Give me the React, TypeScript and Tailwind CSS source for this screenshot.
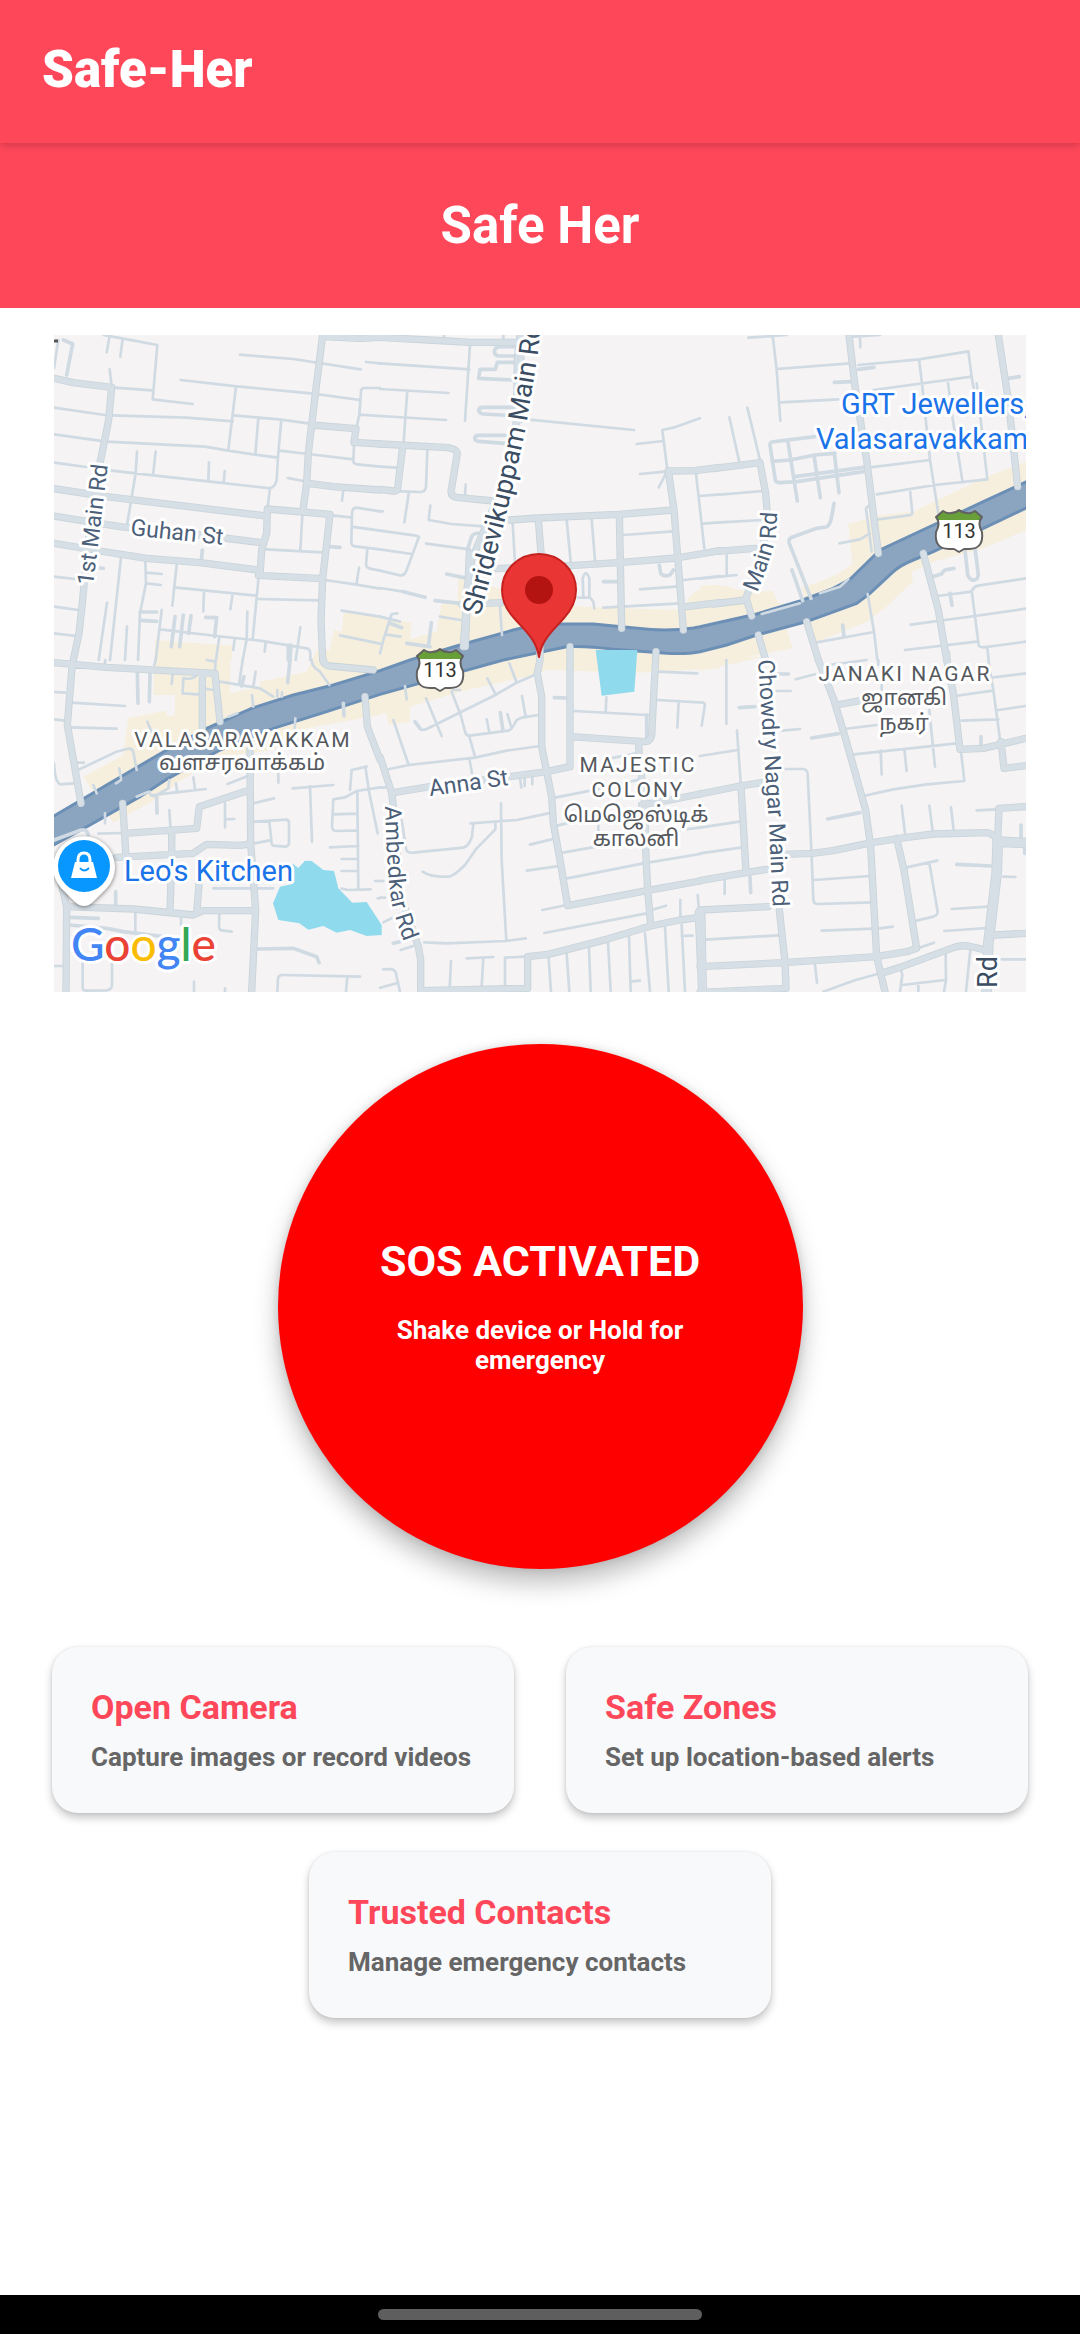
import React from "react";

type Tile = {
  x: number;
  y: number;
  minor: string;
  lane: string;
  main: string;
  built: string;
};

/* Street geometry, one entry per map tile. Tile units are a third of a map unit. */
const TILES: Tile[] = [
  {
    x: -42,
    y: -45,
    built:
      "M355,962 L575,977 V1020 H345Z M912,872 L1020,888 V1020 H862 L870,985 L882,930 L905,935 Z",
    minor:
      "M190,45 L262,58 L352,75 L338,238 L458,252 M209,48 L200,97 M248,56 L241,110 M209,148 L214,192 M222,203 L337,211 M42,145 L55,60 M422,180 L590,199 L820,221 L960,240 M600,104 L760,117 L962,148 M588,200 L565,390 M42,263 L195,285 M215,286 L440,293 L578,304 M582,286 L724,299 L810,311 M655,293 L646,403 M724,299 L714,410 L710,480 Q706,500 690,505 L683,560 M42,343 L200,365 L495,380 L560,391 L645,404 L714,413 M718,392 L805,402 L940,418 M42,428 L140,441 M215,452 L340,466 L505,484 L690,505 M291,395 L287,460 L261,615 M347,395 L339,466 M507,427 L505,484 M554,453 L551,488 M743,474 L800,485 M787,585 L781,690 M678,688 L845,697 M875,586 L932,592 M978,126 L1020,130 M1020,204 L972,204 Q964,204 963,214 L958,284 L950,320 M958,284 L1020,288 M942,375 L940,425 Q942,432 952,433 L1020,440 M910,510 L906,542 M1020,574 L950,563 Q937,563 936,580 L934,665 Q934,678 945,679 L1020,688 M934,620 L1020,632 M982,685 L978,735 Q980,744 990,746 L1020,752 M855,780 L950,794 L1020,806 M957,743 L949,794 M243,712 L210,1020 M316,725 L318,790 L300,880 L294,1020 M320,758 L365,762 M320,790 L362,795 M410,735 L397,857 M402,802 L650,827 M492,812 L490,874 M578,821 L571,868 M656,770 L638,958 M655,837 L833,841 M42,770 L105,777 M42,860 L115,870 M42,940 L108,948 M201,848 L176,1020 M261,920 L255,1020 M365,870 L347,1020 M360,928 L530,948 L660,962 L800,985 Q811,988 811,1000 L811,1020 M622,875 L620,958 L608,1020 M538,950 L528,1020 M584,955 L580,990 M677,965 L674,995 M781,922 L767,1020 M905,872 L1020,890 M900,946 L1020,971",
    lane:
      "M70,60 L98,72 L80,165 M484,720 L487,690 M300,876 H350 M300,901 L350,904 M405,890 L394,980 M430,885 L419,980 M453,887 L446,940 M497,892 L530,893 L524,950 M745,975 V1020 M753,975 L750,1020 M868,680 L900,682 M180,744 L190,745",
    main:
      "M42,175 L100,188 L215,202 L206,300 L180,430 L165,520 L150,620 L135,760 L128,840 L117,940 L100,1020 M848,45 L836,140 L815,313 L805,400 L800,490 L788,577 M852,50 L960,55 L1020,52 M42,506 L200,530 L670,587 M42,588 L240,620 L480,645 L665,668 M42,670 L180,693 L320,715 L480,728 L655,750 M660,765 L665,690 L680,640 L682,567 L870,583 L848,775 L843,900 L848,1020 M655,766 L848,776 M815,315 L948,326 L942,367 L1020,372 M805,490 L880,500 L1020,510",
  },
  {
    x: 978,
    y: -45,
    built:
      "M235,775 L340,800 L520,855 L720,865 L910,870 L925,835 Q950,800 1020,795 V1020 H0 V895 L95,907 L90,958 L170,935 L185,850 L232,855Z",
    minor:
      "M0,130 L268,148 M270,75 L255,302 M0,207 L205,219 M82,212 L71,365 M0,288 L198,300 M0,440 L48,443 M142,390 L138,500 Q136,516 122,516 L62,514 M86,520 L73,607 M0,574 H8 M151,557 L146,600 L215,612 L310,619 M0,632 L108,647 L117,650 L78,755 Q72,768 60,766 L0,752 M0,688 L95,702 M138,671 L270,688 M0,804 L70,815 M257,494 L255,525 M192,45 V55 M370,45 V60 M440,298 L762,330 M770,372 L850,363 M780,462 L855,455 M960,295 L880,323 L847,330 L862,450 M858,460 L836,502 M398,610 L405,730 M560,600 L572,725 M635,597 L645,722 M730,645 L880,634 M948,460 L973,685 M958,528 L1020,523 M970,611 L1020,607 M780,808 L895,799 M912,780 L1020,768 M670,863 L900,850 M360,860 L366,945 M180,890 L240,900 M0,890 L60,905 M52,880 L35,882 L10,960 L0,1000 M15,943 L62,950 M610,830 L608,775 Q617,745 628,775 L628,830 L640,845 L643,865 M595,833 L628,833",
    lane:
      "M200,762 L262,775 M70,815 L135,832 M165,842 L240,850 M30,910 L65,923 M154,908 L145,980 M80,970 L150,980 M405,80 H360 Q343,82 343,96 Q345,108 360,108 H400 M400,127 H352 L346,148 H300 L296,175 L400,180 M400,262 H310 Q296,262 296,272 Q300,282 310,282 L400,287 M375,346 H295 Q284,346 284,356 Q286,364 296,364 L375,370 M262,690 L275,650 Q280,638 300,640 M670,785 H712 M838,735 L842,760 Q850,772 870,765 L880,750",
    main:
      "M0,52 L200,63 L270,67 L405,67 M420,45 L412,120 L410,300 L390,420 L350,540 L275,720 L262,800 L250,980 M424,45 L418,300 M268,700 L256,980 M0,372 L205,383 Q232,388 232,400 L213,515 Q214,530 230,532 L340,543 M68,380 L53,505 Q52,515 40,513 L0,508 M390,600 L475,594 L718,583 L880,570 M475,598 L483,700 M718,585 L725,925 M865,452 L882,570 L910,930 M865,453 L945,452 L1020,442 M280,750 L365,745 L570,737 L725,727 L890,714 L1020,692 M245,853 L365,848 M918,860 L1020,848",
  },
  {
    x: 1938,
    y: -45,
    built:
      "M978,425 L860,470 L640,575 L545,585 L445,612 L457,730 Q420,770 305,802 L320,850 L235,850 L218,812 L150,818 L85,800 Q30,790 0,800 V1035 L200,1000 L278,985 L250,890 L300,890 L320,935 L350,965 L500,905 L560,860 L638,785 L636,755 L700,725 L850,685 L978,630 Z",
    minor:
      "M145,53 L260,45 M218,47 L230,150 L241,302 M230,147 L450,130 M242,247 L415,238 M88,292 L118,427 M142,263 L180,420 M480,50 L481,82 M460,50 L540,45 M520,210 L815,170 M657,118 L666,190 L690,420 L715,580 M805,94 L815,170 L822,210 M743,180 L757,290 L788,488 M475,135 L657,118 L805,94 M830,190 L862,478 L705,495 L530,523 M510,442 L690,420 M630,508 L637,580 Q636,586 620,587 L535,598 M510,555 L498,565 L515,695 M418,670 L480,658 L510,640 M60,524 L190,513 M60,607 L190,600 M80,705 V765 M0,776 L110,765 M185,882 L300,850 M360,820 L420,800 L445,778 M503,822 L522,935 L532,1020 M350,967 L522,936 M712,828 L815,815 Q820,800 835,797 L978,775 M815,812 L836,975 Q838,982 850,982 L978,965 M632,914 L825,888 L978,866 M615,990 L830,965 M862,985 L866,1020",
    lane:
      "M475,148 L522,142 M403,187 L455,185 M345,350 L215,366 Q210,368 210,376 L226,480 Q228,488 240,488 L290,485 L490,455 M216,424 L270,420 L345,405 L405,400 M263,360 L292,543 M342,405 L361,533 M403,400 L417,518 M285,470 L490,442 M402,550 L395,590 Q390,618 378,621 L350,625 L280,650 Q265,655 267,668 L333,835 M276,750 L308,842 M697,770 L725,762 Q730,748 745,748 L762,745 M750,820 L756,856 M428,915 L432,950 M925,175 L958,170 M795,690 L803,765 Q815,790 832,775 L835,765 L825,685",
    main:
      "M447,45 L465,200 L500,420 L535,700 M895,45 L925,240 L953,500 M40,446 L180,428 L197,520 L205,620 L170,740 L138,835 L155,888 M40,695 L165,685 M40,852 L138,840 M175,945 L197,1020 M320,905 L355,1020 M670,700 L715,870 L740,1020",
  },
  {
    x: -42,
    y: 975,
    built:
      "M345,-60 L572,-43 L570,100 L660,80 V65 L800,35 L830,-30 H1020 V165 L800,205 L700,270 L540,290 L410,370 L360,410 L220,488 L130,350 L250,285 L265,175 L375,152 L385,170 L405,165 V105 H340Z",
    minor:
      "M42,96 L75,98 M95,128 L255,138 M42,178 L75,182 M92,202 L230,206 M42,310 Q45,365 60,373 L100,370 M118,328 L230,275 L260,267 Q275,262 280,275 L290,330 M110,308 H132 M195,460 V490 M175,521 L245,519 M388,450 L391,500 M340,405 L400,398 L497,387 M330,395 Q328,410 345,408 L385,385 L388,360 M408,370 L412,398 M460,352 L465,388 M563,372 L618,350 M715,340 V368 M758,385 L880,375 M810,380 L816,545 M640,430 L702,415 M643,485 L740,479 Q747,480 747,490 V550 Q745,560 735,560 L700,557 Q694,555 694,540 L688,485 M643,550 L690,541 M555,430 V502 M555,478 L583,477 M538,762 L537,800 Q538,812 550,812 L575,815 M520,685 H700 M423,775 V795 M286,760 L286,822 M215,590 H245 M930,390 L935,330 L980,320 M976,320 L988,400 L1013,520 M1020,382 L950,393 L915,412 L880,418 L876,500 Q878,514 890,513 L952,511 M880,463 L950,461 M952,395 L955,688 M870,562 L955,558 M905,597 H952 M905,633 H952 M905,686 L925,690 L992,688 M1005,663 H1020 M1013,715 h7 M712,995 L714,955 Q716,945 728,945 L960,950 M922,950 L918,995 M462,965 V995 M555,985 V995 M42,918 H65 M128,905 V985 Q128,992 140,992 L200,991 Q216,988 216,975 V905 M196,0 L192,28 M347,0 L343,15 M500,0 L527,5 L525,30 M398,40 L395,72 M470,45 Q460,60 430,55 L428,100 L475,103 M490,85 L520,90 M540,65 L660,85 L700,110 M608,0 L597,75 M647,35 L640,80 M636,105 L640,140 M815,0 Q815,20 840,35 L868,75 M766,175 L764,205 M322,185 L345,240 M160,375 L170,400 M238,325 L243,355 M228,370 L243,360 M290,410 L325,395 M565,170 L592,160 M712,90 L712,110 M726,97 V110",
    lane:
      "M292,40 L294,130 M330,40 L328,125 M750,0 L743,68 M350,408 L351,460 M910,130 L912,168 M227,695 V735 M88,772 L175,775 M88,795 L200,805 L250,815 L370,830 M653,867 L760,865 L830,890 L837,908 M612,50 L605,78 M42,540 L110,515 Q140,500 145,525",
    main:
      "M42,8 L200,22 L525,40 L540,185 M97,10 L82,195 L123,430 M487,45 V205 M248,430 L258,590 M255,520 L470,505 L478,440 L620,393 M395,510 V580 M630,270 L632,550 L647,750 L635,995 M230,592 L460,580 L500,553 L600,556 L630,552 M393,660 L390,755 M478,660 L470,760 M62,660 L80,740 L78,995 M80,740 L280,747 L460,765 L490,752 L645,752 M975,110 L982,200 L1020,300 M850,0 Q850,15 870,18 L1000,30",
  },
  {
    x: 978,
    y: 975,
    built:
      "M0,0 H1020 V25 L770,38 L500,30 L460,45 L240,95 L90,140 L90,185 L25,195 L20,160 L0,163Z",
    minor:
      "M75,78 L80,118 M138,115 L185,228 M120,207 Q125,212 140,207 L340,108 L410,68 L470,42 M322,55 L348,105 M388,10 L410,68 M240,90 H218 L215,95 L242,165 L255,215 Q258,228 270,227 L385,212 Q395,210 410,180 L425,173 L475,165 M426,108 L437,170 M320,178 L327,212 M382,162 L395,205 M268,230 L285,290 M40,180 L86,315 M15,330 L86,315 L285,293 L380,272 L480,258 M268,295 L276,340 M420,355 L424,383 M434,355 V378 M457,350 V373 M0,383 L15,382 M363,430 L365,600 L379,843 M272,490 L410,480 L505,460 M280,490 L276,530 Q265,560 250,563 L100,578 Q80,580 78,565 L65,480 M346,488 L346,508 L290,565 L255,615 Q220,650 205,650 Q150,652 128,635 M450,554 L515,538 M440,632 L530,619 M487,750 L560,735 M493,819 L800,760 M525,413 L650,388 L780,358 M530,497 L560,490 M548,578 L650,560 M558,656 L790,610 L960,582 M690,295 L770,280 M655,490 V520 M900,510 L960,503 M580,153 L803,165 M679,112 L677,158 M835,35 L952,40 M832,120 L970,128 Q976,130 974,140 L965,197 M896,123 L892,202 M822,748 L858,737 M901,720 V780 M953,705 L957,750 M905,795 L915,995 M905,828 L938,827 M506,895 L513,995 M560,882 L568,995 M627,862 L632,995 M684,845 L692,995 M747,830 L752,995 M795,820 L810,995 M855,802 L866,995 M752,965 L780,962 M133,847 L200,850 L378,843 L437,835 M260,895 L340,891 M310,893 L305,980 M213,903 L209,985 M375,975 V893 L435,890 M10,928 L35,927 Q48,930 50,950 L60,995 M0,983 L50,970 M0,663 h10 M0,713 h15 M10,787 L60,762 M62,870 L100,858",
    lane: "M361,158 L369,212 M523,113 L558,114 M105,185 L120,205 M800,165 V235 M40,850 L60,845",
    main:
      "M480,-40 L480,0 L472,40 L485,110 L485,260 L500,335 L515,410 L520,490 L540,600 L563,737 L800,692 L960,663 M570,-40 V320 L500,335 L390,350 L150,380 L40,398 M570,230 L795,245 Q813,243 815,225 L828,-25 M776,250 L778,300 L795,430 L797,570 L803,690 L812,795 M0,290 L35,398 L45,480 L60,700 L115,860 L122,900 V992 L443,985 V890 L505,883 L680,838 L812,798 L900,780 L960,772 M965,757 L955,757 L965,995 M785,435 L870,420 L960,402",
  },
  {
    x: 1938,
    y: 975,
    built: "M0,-10 H190 L0,33Z",
    minor:
      "M79,0 V192 M111,212 L122,370 M0,288 L113,270 M0,503 L118,485 M0,580 L122,563 M74,655 V702 M245,212 L300,207 M230,93 L272,93 M287,58 L345,43 M240,327 L308,327 Q322,328 323,342 L335,590 L340,720 Q342,733 355,732 L515,727 M342,660 L510,648 M385,15 L500,0 M432,207 L530,195 M535,0 V15 M545,75 V90 M455,284 L770,250 M542,272 L545,343 M613,268 L620,333 M688,150 L705,320 M783,275 L793,363 L680,373 L580,388 L490,408 M765,108 L878,92 M785,182 L895,178 M895,150 L978,138 M865,0 L880,90 L900,238 M880,52 L978,40 M605,437 L615,520 M688,437 L698,513 M753,442 L761,510 M830,451 L890,448 M620,622 L712,602 M688,608 L713,755 Q713,765 700,770 L650,782 M755,747 L865,740 M733,813 L860,804 M910,650 L946,651 M905,898 H978 M365,812 L540,805 L578,800 M662,862 L702,848 M15,839 L235,826 M345,915 L351,968 M370,995 L460,962 L545,938 M737,885 L738,960 L732,995 M603,930 L607,945 L600,995 M607,975 L735,960 M655,975 V995 M811,870 L798,995",
    lane:
      "M118,143 L165,140 M335,234 L415,221 M383,477 L480,458 M843,230 V255 M963,495 V535 M974,560 V580 M150,650 L152,698 M770,613 L875,618 M230,42 h35",
    main:
      "M0,402 L120,378 L185,368 M123,380 L138,632 M0,662 L138,638 L200,628 M255,583 L335,580 L400,572 L515,548 L620,532 L700,522 L860,518 Q875,520 895,540 M740,-20 L742,10 M355,0 L400,115 L435,230 L497,450 L512,560 L530,890 L555,995 M410,135 L480,122 M590,535 L612,630 L650,865 L620,875 L530,890 L250,908 L0,920 M545,940 L600,922 L760,863 Q780,855 805,858 L865,872 M740,0 L760,100 L780,268 L850,265 L978,235 M903,245 L912,325 L978,317 M978,440 L897,445 L893,540 L978,544 M978,554 L893,550 M888,540 L885,640 L860,850 L855,995 M898,550 L895,640 L870,850 L865,995 M885,825 L978,820 M0,750 L205,740 M5,750 L10,995 M238,750 L255,905 L258,985 L0,997",
  },
];

const HIGHWAY =
  "M-20,1453 L0,1443 L158,1350 L338,1245 L458,1180 L598,1118 L718,1080 L838,1050 L978,1007 L1068,975 L1218,930 L1378,885 Q1440,867 1518,867 L1618,867 L1750,880 Q1838,890 1918,879 L1938,875 L2108,837 L2238,798 L2338,760 L2388,733 L2478,645 L2638,570 L2788,500 L2940,430 V508 L2788,580 L2638,650 L2578,675 Q2540,690 2518,710 L2448,775 L2408,805 L2258,860 L2108,900 L2018,930 L1938,950 Q1900,958 1838,955 L1678,943 Q1600,932 1538,935 L1348,975 L1150,1030 L978,1078 L818,1130 L658,1180 L498,1245 L343,1330 L258,1385 L108,1470 L-20,1540Z";

function Layer({ part, className, width }: { part: "minor" | "lane" | "main"; className: string; width: number }) {
  return (
    <g className={className} fill="none" strokeWidth={width} strokeLinecap="round" strokeLinejoin="round">
      {TILES.map((t, i) => (
        <path key={i} d={t[part]} transform={`translate(${t.x} ${t.y})`} />
      ))}
    </g>
  );
}

function Shield({ x, y }: { x: number; y: number }) {
  const outline =
    "M-16,1 Q-12,4 -8,3 Q-3,3 0,0 Q3,3 8,3 Q12,4 16,1 L23,7 Q18,13 23,22 Q25,39 10,39 H5 L0,42 L-5,39 H-10 Q-25,39 -23,22 Q-18,13 -23,7 Z";
  return (
    <g transform={`translate(${x} ${y})`}>
      <path d={outline} fill="#fff" />
      <path d="M-16,1 Q-12,4 -8,3 Q-3,3 0,0 Q3,3 8,3 Q12,4 16,1 L23,7 L21,10 H-21 L-23,7Z" fill="#689f38" />
      <path d={outline} fill="none" stroke="#616161" strokeWidth="2" strokeLinejoin="round" />
      <text y="28" textAnchor="middle" className="fill-[#333] text-[20px]">
        113
      </text>
    </g>
  );
}

const halo = "stroke-white [paint-order:stroke] [stroke-linejoin:round] stroke-[6px]";

function StreetMap() {
  return (
    <svg
      viewBox="0 0 972 657"
      role="img"
      aria-label="Map of Valasaravakkam with the current location"
      className="block h-auto w-full bg-[#f5f3f4] font-['Roboto','Noto_Sans_Tamil','Noto_Sans',sans-serif]"
    >
      <defs>
        <path id="shridevi" d="M426,281 C440,232 462,142 473,86 L484,18 L492,-50" />
        <path id="main-rd" d="M703,258 Q718,222 722,200 L725,150" />
        <path id="ambedkar" d="M331,471 Q333,540 338,570 Q343,590 357,625" />
        <path id="chowdry" d="M704,325 L710,420 L715,490 L720,600" />
      </defs>

      <g transform="scale(0.333333)">
        {TILES.map((t, i) => (
          <path key={i} d={t.built} transform={`translate(${t.x} ${t.y})`} fill="#f6efdd" />
        ))}
        <path d={HIGHWAY} fill="#8ba5c1" stroke="#6c8fb5" strokeWidth="9" />
        <path
          transform="translate(-42 975)"
          d="M757,610 L775,624 L795,602 L815,603 L850,630 L882,633 L895,685 L937,728 L980,726 L1025,795 V825 L980,828 L930,810 L890,818 L850,798 L805,809 L778,790 L715,780 L699,730 L720,680 L757,672Z"
          fill="#90daee"
        />
        <path transform="translate(978 975)" d="M647,-30 H772 L763,95 L665,107Z" fill="#90daee" />
        <Layer part="minor" className="stroke-[#d0dae3]" width={8} />
        <Layer part="lane" className="stroke-[#d0dae3]" width={11} />
        <Layer part="main" className="stroke-[#c9d4da]" width={22} />
        <Layer part="main" className="stroke-[#d6dfe6]" width={17} />
      </g>

      <g className={`fill-[#4c6079] text-[23px] ${halo}`}>
        <text transform="translate(76 200) rotate(6)">Guhan St</text>
        <text transform="translate(39 251) rotate(-83)">1st Main Rd</text>
        <text transform="translate(376 461) rotate(-8)">Anna St</text>
        <text>
          <textPath href="#main-rd">Main Rd</textPath>
        </text>
        <text>
          <textPath href="#ambedkar">Ambedkar Rd</textPath>
        </text>
        <text>
          <textPath href="#chowdry">Chowdry Nagar Main Rd</textPath>
        </text>
      </g>
      <g className={`fill-[#3a4d63] text-[27px] ${halo}`}>
        <text>
          <textPath href="#shridevi">Shridevikuppam Main Rd</textPath>
        </text>
        <text transform="translate(943 653) rotate(-90)">Rd</text>
      </g>
      <path d="M0,6 H4" stroke="#555" strokeWidth="3" />

      <g className={`fill-[#55595e] text-[21px] ${halo}`} textAnchor="middle">
        <g className="tracking-widest">
          <text x="189" y="412">VALASARAVAKKAM</text>
          <text x="584" y="437">MAJESTIC</text>
          <text x="584" y="462">COLONY</text>
          <text x="851" y="346">JANAKI NAGAR</text>
        </g>
        <g className="text-[22px]">
          <text x="188" y="435">வளசரவாக்கம்</text>
          <text x="582" y="487">மெஜெஸ்டிக்</text>
          <text x="582" y="511">காலனி</text>
          <text x="850" y="370">ஜானகி</text>
          <text x="850" y="395">நகர்</text>
        </g>
      </g>

      <g className={`fill-[#1a73e8] text-[29px] ${halo}`}>
        <text x="787" y="79">GRT Jewellers,</text>
        <text x="762" y="114">Valasaravakkam</text>
        <text x="70" y="546">Leo's Kitchen</text>
      </g>

      <Shield x={905} y={175} />
      <Shield x={386} y={314} />

      <g>
        <path
          d="M485,322 C482,304 472,297 460,283 Q448,270 448,255 A37,36 0 0 1 522,255 Q522,270 510,283 C498,297 488,304 485,322Z"
          fill="#ea3535"
          stroke="#c5221f"
          strokeWidth="2"
          strokeLinejoin="round"
        />
        <circle cx="485" cy="255" r="14" fill="#b31412" />
      </g>

      <g>
        <path
          d="M30,571 Q25,571 21,567 L7,553 A31,31 0 1 1 53,553 L39,567 Q35,571 30,571Z"
          fill="#fff"
          className="drop-shadow-[0_1px_2px_rgba(0,0,0,0.5)]"
        />
        <circle cx="30" cy="531" r="26" fill="#0896ff" />
        <path d="M21,527 H39 L43,543 H17Z" fill="#fff" />
        <path d="M24,528 V525 Q24,518 30,518 Q36,518 36,525 V528" fill="none" stroke="#fff" strokeWidth="3" />
        <path d="M26,533 Q30,538 35,533" fill="none" stroke="#0896ff" strokeWidth="2" />
      </g>

      <text x="17" y="626" className={`font-['Lato','Roboto',sans-serif] text-[46px] font-medium ${halo}`}>
        <tspan fill="#4285f4">G</tspan>
        <tspan fill="#ea4335">o</tspan>
        <tspan fill="#fbbc05">o</tspan>
        <tspan fill="#4285f4">g</tspan>
        <tspan fill="#34a853">l</tspan>
        <tspan fill="#ea4335">e</tspan>
      </text>
    </svg>
  );
}

function ActionCard({ title, text }: { title: string; text: string }) {
  return (
    <button
      type="button"
      className="flex w-[calc(50%-26px)] flex-col rounded-[26px] bg-[#f8f9fb] px-[39px] py-10 text-left font-bold shadow-[0_5px_8px_rgba(0,0,0,0.22),0_0_3px_rgba(0,0,0,0.1)]"
    >
      <span className="text-[34px] leading-10 text-[#ff475a]">{title}</span>
      <span className="mt-[14px] text-[26px] leading-8 text-[#666]">{text}</span>
    </button>
  );
}

export default function App() {
  return (
    <div className="flex min-h-screen flex-col bg-white font-['Roboto',sans-serif]">
      <header className="relative bg-[#ff475a] px-[42px] pt-10 pb-[43px] shadow-[0_2px_8px_rgba(0,0,0,0.2)]">
        <h1 className="text-[51px] leading-[60px] font-black text-white">Safe-Her</h1>
      </header>
      <div className="bg-[#ff475a] py-[52px] text-center">
        <h2 className="text-[51px] leading-[61px] font-bold text-white">Safe Her</h2>
      </div>

      <main className="flex flex-1 flex-col items-center px-[52px] pb-[52px]">
        <div className="w-full px-[2px] pt-[27px]">
          <StreetMap />
        </div>

        <button
          type="button"
          className="mt-[52px] flex size-[525px] flex-col items-center justify-center rounded-full bg-[red] px-[90px] pb-[3px] font-bold text-white shadow-[0_14px_24px_rgba(0,0,0,0.25),0_0_8px_rgba(0,0,0,0.12)]"
        >
          <span className="text-[43px] leading-[50px] whitespace-nowrap">SOS ACTIVATED</span>
          <span className="mt-[29px] text-[26px] leading-[30px]">Shake device or Hold for emergency</span>
        </button>

        <div className="mt-[78px] flex w-full flex-wrap justify-center gap-x-[52px] gap-y-[39px]">
          <ActionCard title="Open Camera" text="Capture images or record videos" />
          <ActionCard title="Safe Zones" text="Set up location-based alerts" />
          <ActionCard title="Trusted Contacts" text="Manage emergency contacts" />
        </div>
      </main>

      <footer className="flex h-[39px] items-center justify-center bg-black">
        <div className="h-[11px] w-[30%] rounded-full bg-[#5e5e5e]" />
      </footer>
    </div>
  );
}
